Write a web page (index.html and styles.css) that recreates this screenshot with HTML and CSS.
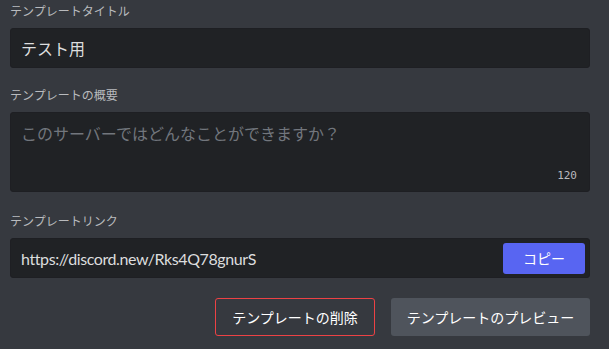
FILE: index.html
```html
<!DOCTYPE html>
<html lang="ja">
<head>
    <meta charset="UTF-8">
    <meta name="viewport" content="width=device-width, initial-scale=1.0">
    <title>テンプレート設定</title>
    <link rel="stylesheet" href="styles.css">
</head>
<body>
    <div class="container">
        <div class="form-group">
            <label for="title">テンプレートタイトル</label>
            <input type="text" id="title" value="テスト用">
        </div>

        <div class="form-group desc-group">
            <label for="desc">テンプレートの概要</label>
            <div class="textarea-wrap">
                <textarea id="desc" placeholder="このサーバーではどんなことができますか？"></textarea>
                <span class="counter">120</span>
            </div>
        </div>

        <div class="form-group">
            <label>テンプレートリンク</label>
            <div class="link-box">
                <span class="link-text">https://discord.new/Rks4Q78gnurS</span>
                <button class="btn-copy">コピー</button>
            </div>
        </div>

        <div class="actions">
            <button class="btn btn-delete">テンプレートの削除</button>
            <button class="btn btn-preview">テンプレートのプレビュー</button>
        </div>
    </div>
</body>
</html>
```

FILE: styles.css
```css
body {
    margin: 0;
    background-color: #36393f;
    font-family: "Noto Sans", "Noto Sans CJK JP", sans-serif;
}
.container {
    width: 580px;
    padding: 4px 0 0 10px;
}
.form-group {
    margin-bottom: 20px;
}
.desc-group {
    margin-bottom: 22px;
}
label {
    display: block;
    height: 16px;
    line-height: 16px;
    margin-bottom: 8px;
    font-size: 12px;
    color: #b9bbbe;
}
input, textarea {
    box-sizing: border-box;
    width: 100%;
    border: 1px solid #1e1f23;
    border-radius: 3px;
    background-color: #202225;
    color: #dcddde;
    font-family: inherit;
    font-size: 16px;
    outline: none;
}
input {
    height: 40px;
    padding: 0 10px;
}
.textarea-wrap {
    position: relative;
}
textarea {
    display: block;
    height: 80px;
    padding: 8px 10px;
    resize: none;
}
textarea::placeholder {
    color: #72767d;
}
.counter {
    position: absolute;
    right: 13px;
    bottom: 10px;
    font-family: "DejaVu Sans Mono", monospace;
    font-size: 11px;
    color: #b9bbbe;
}
.link-box {
    box-sizing: border-box;
    display: flex;
    align-items: center;
    justify-content: space-between;
    height: 40px;
    padding: 0 4px 0 10px;
    border: 1px solid #1e1f23;
    border-radius: 3px;
    background-color: #202225;
}
.link-text {
    font-family: Lato, "Noto Sans CJK JP", sans-serif;
    font-size: 16px;
    letter-spacing: -0.4px;
    color: #dcddde;
}
.btn-copy {
    width: 82px;
    height: 31px;
    border: none;
    border-radius: 3px;
    background-color: #5865f2;
    color: #fff;
    font-family: inherit;
    font-size: 14px;
}
.actions {
    display: flex;
    justify-content: flex-end;
    gap: 16px;
}
.btn {
    box-sizing: border-box;
    height: 38px;
    padding: 0;
    border-radius: 3px;
    font-family: inherit;
    font-size: 14px;
    color: #fff;
    white-space: nowrap;
}
.btn-delete {
    width: 160px;
    border: 1px solid #ed4245;
    background: transparent;
}
.btn-preview {
    width: 199px;
    border: none;
    background-color: #4f545c;
}
```
